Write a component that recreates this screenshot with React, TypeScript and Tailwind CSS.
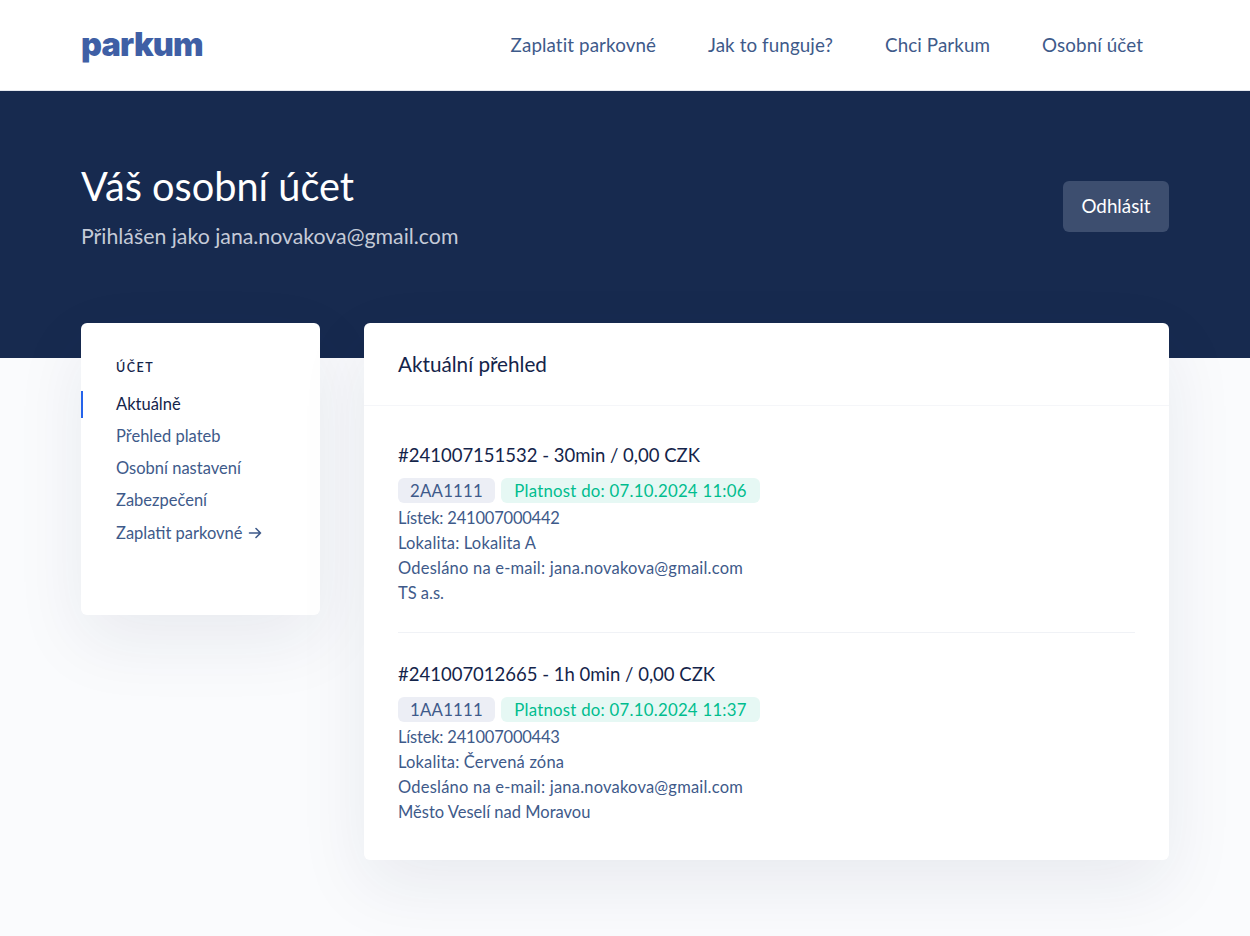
const navLinks = ["Zaplatit parkovné", "Jak to funguje?", "Chci Parkum", "Osobní účet"];
const sideLinks = ["Přehled plateb", "Osobní nastavení", "Zabezpečení"];

const tickets = [
  {
    id: "#241007151532 - 30min / 0,00 CZK",
    plate: "2AA1111",
    until: "Platnost do: 07.10.2024 11:06",
    ticket: "Lístek: 241007000442",
    place: "Lokalita: Lokalita A",
    owner: "TS a.s.",
  },
  {
    id: "#241007012665 - 1h 0min / 0,00 CZK",
    plate: "1AA1111",
    until: "Platnost do: 07.10.2024 11:37",
    ticket: "Lístek: 241007000443",
    place: "Lokalita: Červená zóna",
    owner: "Město Veselí nad Moravou",
  },
];

export default function App() {
  return (
    <div className="min-h-[936px] bg-[#fafbfd] font-['Lato',sans-serif]">
      <header className="h-[91px] border-b border-[#e5e8ef] bg-white">
        <div className="mx-auto flex h-[90px] w-[1088px] items-center justify-between">
          <span className="font-['Inter',sans-serif] text-[32.5px] leading-none font-black tracking-[-0.8px] text-[#3f5fa5]">parkum</span>
          <nav className="flex gap-[52px] pr-[26px] text-[18.8px] tracking-[0.1px] text-[#3e5a8a]">
            {navLinks.map((l) => (
              <a key={l}>{l}</a>
            ))}
          </nav>
        </div>
      </header>

      <section className="h-[267px] bg-[#172a4f]">
        <div className="mx-auto flex w-[1088px] items-start justify-between pt-[71px]">
          <div>
            <h1 className="text-[39.7px] leading-[48px] font-normal text-white">Váš osobní účet</h1>
            <p className="mt-[12px] text-[21.3px] leading-7 text-[#c5cbd8]">Přihlášen jako jana.novakova@gmail.com</p>
          </div>
          <button className="mt-[19px] h-[51px] w-[106px] rounded-md bg-[#3d4e6f] text-[18.8px] text-white">
            Odhlásit
          </button>
        </div>
      </section>

      <main className="mx-auto -mt-[35px] flex w-[1088px] items-start gap-[44px]">
        <aside className="h-[292px] w-[239px] shrink-0 rounded-md bg-white pt-[37px] shadow-[0_25px_70px_rgba(23,42,79,0.08)]">
          <div className="pl-[35px] text-[12.5px] leading-4 font-semibold tracking-[1.5px] text-[#14244a]">ÚČET</div>
          <ul className="mt-[12px] text-[16.5px]">
            <li className="flex h-[32px] items-center">
              <span className="flex h-[27px] items-center border-l-2 border-[#2563eb] pl-[33px] text-[#14244a]">Aktuálně</span>
            </li>
            {sideLinks.map((l) => (
              <li key={l} className="flex h-[32.3px] items-center pl-[35px] text-[#3e5a8a]">
                {l}
              </li>
            ))}
            <li className="flex h-[32.3px] items-center gap-[5px] pl-[35px] text-[#3e5a8a]">
              Zaplatit parkovné
              <svg width="14" height="14" viewBox="0 0 14 14" fill="none" stroke="currentColor" strokeWidth="1.6" strokeLinecap="round" strokeLinejoin="round">
                <path d="M1.5 7h11M8 2.5 12.5 7 8 11.5" />
              </svg>
            </li>
          </ul>
        </aside>

        <div className="w-[805px] rounded-md bg-white shadow-[0_25px_70px_rgba(23,42,79,0.08)]">
          <div className="flex h-[83px] items-center border-b border-[#f5f6f9] px-[34px] pt-[1px] text-[20.7px] text-[#14244a]">
            Aktuální přehled
          </div>
          <div className="px-[34px]">
            {tickets.map((t, i) => (
              <div key={t.id} className={i === 0 ? "border-b border-[#f0f2f6] pt-[35px] pb-[26px]" : "pt-[27px] pb-[35px]"}>
                <div className="text-[18.5px] leading-7 text-[#14244a]">{t.id}</div>
                <div className="mt-[9px] flex gap-[6px] text-[16.8px] leading-[25px] tracking-[0.25px]">
                  <span className="w-[97px] rounded-md bg-[#eceef5] text-center text-[#3e5a8a]">{t.plate}</span>
                  <span className="w-[259px] rounded-md bg-[#e6f8f4] text-center text-[#00bd8e]">{t.until}</span>
                </div>
                <div className="mt-[3px] text-[16.5px] leading-[25px] text-[#3e5a8a]">
                  <div className="tracking-[-0.2px]">{t.ticket}</div>
                  <div className="tracking-[0.17px]">{t.place}</div>
                  <div className="tracking-[0.21px]">Odesláno na e-mail: jana.novakova@gmail.com</div>
                  <div>{t.owner}</div>
                </div>
              </div>
            ))}
          </div>
        </div>
      </main>
    </div>
  );
}
